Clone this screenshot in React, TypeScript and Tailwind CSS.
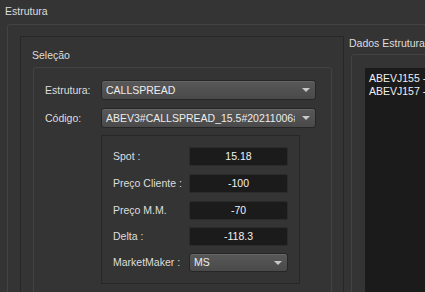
const fontCls = "font-['Liberation_Sans',Arial,sans-serif]"

function Arrow() {
  return (
    <svg width="8" height="4" viewBox="0 0 8 4" className="shrink-0">
      <path d="M0 0h8L4 4z" fill="#c8c8c8" />
    </svg>
  )
}

function Combo({ value, className }: { value: string; className: string }) {
  return (
    <div
      className={`flex items-center rounded-[3px] border border-[#262626] bg-gradient-to-b from-[#585858] to-[#4a4a4a] pl-[4px] pr-[5px] shadow-[inset_0_1px_0_#656565] ${className}`}
    >
      <span className="mr-[7px] flex-1 overflow-hidden whitespace-nowrap text-[#ececec]">{value}</span>
      <Arrow />
    </div>
  )
}

function Field({ label, value, className = "" }: { label: string; value: string; className?: string }) {
  return (
    <div className={`flex h-[19px] items-center ${className}`}>
      <div className="w-[76px] whitespace-nowrap">{label}</div>
      <div className="flex h-[19px] w-[99px] items-center justify-center rounded-[2px] border border-[#2b2b2b] bg-[#1b1b1b] text-[#f2f2f2]">
        {value}
      </div>
    </div>
  )
}

export default function App() {
  return (
    <div
      className={`h-[292px] w-[425px] overflow-hidden bg-[#343434] text-[10.5px] leading-[13px] text-[#dedede] ${fontCls}`}
    >
      <div className="h-[24px] pl-[5px] pt-[5px]">Estrutura</div>
      <div className="ml-[7px] flex h-[400px] w-[520px] rounded-[3px] border border-[#434343] pl-[12px] pt-[11px]">
        {/* left frame */}
        <div className="h-[300px] w-[324px] shrink-0 border border-[#272727] pl-[12px] pt-[12px]">
          <div className="-ml-[1px] h-[18px]">Seleção</div>
          <div className="h-[300px] w-[299px] rounded-[3px] border border-[#434343] pl-[11px] pt-[12px]">
            <div className="flex items-center">
              <div className="w-[56px]">Estrutura:</div>
              <Combo value="CALLSPREAD" className="h-[20px] w-[215px]" />
            </div>
            <div className="mt-[8px] flex items-center">
              <div className="w-[56px]">Código:</div>
              <Combo value="ABEV3#CALLSPREAD_15.5#20211006#ABEV" className="h-[20px] w-[215px]" />
            </div>
            <div className="ml-[56px] mt-[7px] w-[199px] border border-[#272727] px-[11px] pb-[11px] pt-[11px]">
              <Field label="Spot :" value="15.18" />
              <Field label="Preço Cliente :" value="-100" className="mt-[8px]" />
              <Field label="Preço M.M." value="-70" className="mt-[8px]" />
              <Field label="Delta :" value="-118.3" className="mt-[7px]" />
              <div className="mt-[7px] flex items-center">
                <div className="w-[76px] whitespace-nowrap">MarketMaker :</div>
                <Combo value="MS" className="h-[19px] w-[99px]" />
              </div>
            </div>
          </div>
        </div>
        {/* right column */}
        <div className="ml-[7px] flex flex-col">
          <div className="-ml-[2px] h-[18px] whitespace-nowrap pt-[1px]">Dados Estrutura</div>
          <div className="h-[300px] w-[200px] rounded-[3px] border border-[#434343] pl-[13px] pt-[13px]">
            <div className="h-full whitespace-nowrap bg-[#1b1b1b] pl-[4px] pt-[4px] text-[#f0f0f0]">
              <div>ABEVJ155 - CALL 15.50</div>
              <div>ABEVJ157 - CALL 17.50</div>
            </div>
          </div>
        </div>
      </div>
    </div>
  )
}
